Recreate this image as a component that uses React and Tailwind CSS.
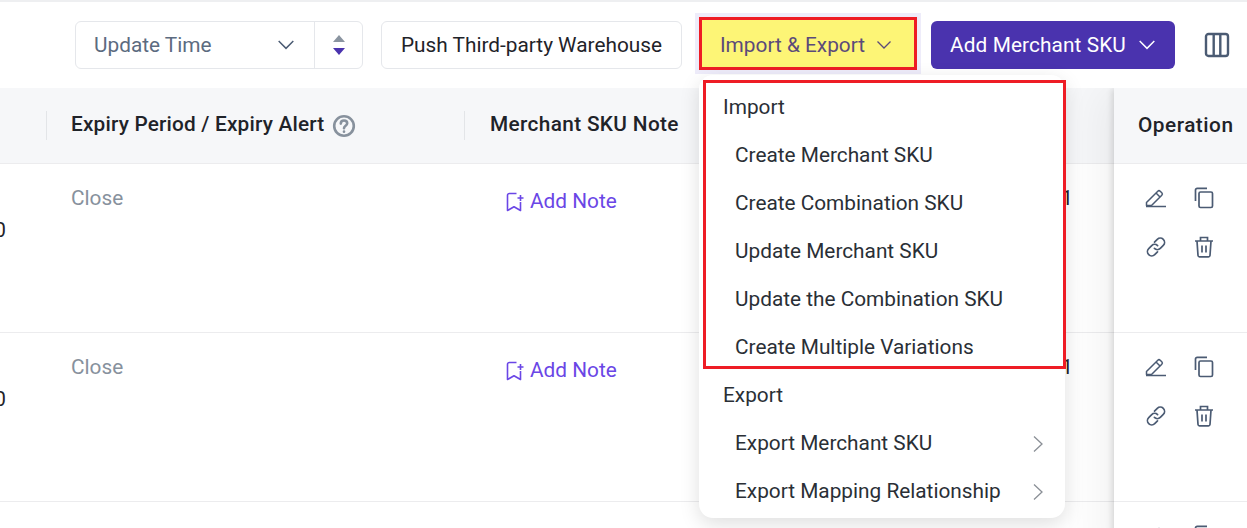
import React from "react";

function Chevron({ className = "" }) {
  return (
    <svg viewBox="0 0 16 16" fill="none" stroke="currentColor" strokeWidth="1.3" className={className}>
      <path d="M1.5 4.5 8 11l6.5-6.5" />
    </svg>
  );
}

function ColumnsIcon() {
  return (
    <svg width="26" height="26" viewBox="0 0 26 26" fill="none" stroke="#4b5b73" strokeWidth="2.4">
      <rect x="2" y="2" width="22" height="22" rx="2.500" />
      <path d="M9.700 2v22M16.300 2v22" />
    </svg>
  );
}

function SortIcon() {
  return (
    <svg width="14" height="20" viewBox="0 0 14 20">
      <path d="M7 0l6 7H1z" fill="#8a94a0" />
      <path d="M7 20l6-7H1z" fill="#4a33ae" />
    </svg>
  );
}

function HelpIcon() {
  return (
    <svg width="24" height="24" viewBox="0 0 24 24" fill="none" stroke="#87919d" strokeWidth="2.600" strokeLinecap="round">
      <circle cx="12" cy="12" r="9.800" />
      <path d="M8.800 9.600c0-2 1.500-3.100 3.200-3.100s3.200 1.100 3.200 2.800c0 2.500-3.200 2.500-3.200 5" />
      <path d="M12 17.600v.2" />
    </svg>
  );
}

function NoteIcon() {
  return (
    <svg width="18" height="20" viewBox="0 0 18 20" fill="none" stroke="#6a46e6" strokeWidth="1.600" strokeLinejoin="round">
      <path d="M10.500 1.500H3.400A1.900 1.900 0 0 0 1.500 3.400V18.500L8 14.800l6.500 3.700V10" />
      <path d="M14.500 3v6M11.500 6h6" />
    </svg>
  );
}

function EditIcon() {
  return (
    <svg width="22" height="22" viewBox="0 0 22 22" fill="none" stroke="#4b5b73" strokeWidth="1.500" strokeLinejoin="round">
      <path d="M1.500 15.500 12.800 4.200a1.700 1.700 0 0 1 2.400 0l1.600 1.600a1.700 1.700 0 0 1 0 2.400L6.500 18.500h-5z" />
      <path d="M1 19.500h20M11 6l4 4" />
    </svg>
  );
}

function CopyIcon() {
  return (
    <svg width="20" height="22" viewBox="0 0 20 22" fill="none" stroke="#4b5b73" strokeWidth="1.700">
      <path d="M1.500 14V3A1.700 1.700 0 0 1 3.200 1.300H13" />
      <rect x="5" y="5" width="13.500" height="15.500" rx="1.500" />
    </svg>
  );
}

function LinkIcon() {
  return (
    <svg width="22" height="22" viewBox="0 0 22 22" fill="none" stroke="#4b5b73" strokeWidth="1.700" strokeLinecap="round">
      <path d="M9.500 6.200 12.300 3.400a4.200 4.200 0 0 1 6 6l-3 3a4.200 4.200 0 0 1-5.900 0" />
      <path d="M12.500 15.800 9.700 18.600a4.200 4.200 0 0 1-6-6l3-3a4.200 4.200 0 0 1 5.900 0" />
    </svg>
  );
}

function TrashIcon() {
  return (
    <svg width="20" height="22" viewBox="0 0 20 22" fill="none" stroke="#4b5b73" strokeWidth="1.700">
      <path d="M1 5h18M6.500 5V1.500h7V5" />
      <path d="M3 5l1 14.500a1.500 1.500 0 0 0 1.500 1.300h9a1.500 1.500 0 0 0 1.500-1.300L17 5" />
      <path d="M8 9.500v7M12 9.500v7" />
    </svg>
  );
}

function Row({ value, last }) {
  return (
    <div className={`flex ${last ? "h-[60px]" : "h-[169px] border-b border-[#ececee]"}`}>
      <div className="w-[47px] shrink-0 relative overflow-hidden">
        {value && <span className="absolute right-[41px] top-[52px] text-[20.8px] leading-[28px] text-[#1f2329]">{value}</span>}
      </div>
      <div className="w-[418px] shrink-0 pl-[24px] pt-[20px] text-[20.8px] leading-[28px] text-[#87919d]">Close</div>
      <div className="w-[232px] shrink-0 pl-[41px] pt-[23px] flex items-start gap-[6px]">
        {!last && (
          <>
            <span className="mt-[5px]"><NoteIcon /></span>
            <span className="text-[20.8px] leading-[28px] text-[#6a46e6]">Add Note</span>
          </>
        )}
      </div>
      <div className="flex-1 overflow-hidden text-right whitespace-nowrap pr-[41px] pt-[20px] text-[20.8px] leading-[28px] text-[#1f2329]">2024-03-25 10:30:21</div>
    </div>
  );
}

function OpRow({ last }) {
  return (
    <div className={`${last ? "h-[60px]" : "h-[169px] border-b border-[#ececee]"} pl-[30px] pt-[23px]`}>
      <div className="grid grid-cols-[48px_48px] gap-y-[27px]">
        <span className="flex w-[24px] justify-center"><EditIcon /></span>
        <span className="flex w-[24px] justify-center"><CopyIcon /></span>
        <span className="flex w-[24px] justify-center"><LinkIcon /></span>
        <span className="flex w-[24px] justify-center"><TrashIcon /></span>
      </div>
    </div>
  );
}

function Item({ children, arrow }) {
  return (
    <div className="h-[48px] flex items-center justify-between pl-[36px] pr-[21px] text-[#2a2f36]">
      <span>{children}</span>
      {arrow && (
        <svg width="12" height="18" viewBox="0 0 12 18" fill="none" stroke="#8a8f96" strokeWidth="1.300">
          <path d="M2 1.500 10 9l-8 7.500" />
        </svg>
      )}
    </div>
  );
}

function Group({ children }) {
  return <div className="h-[48px] flex items-center pl-[24px] text-[#2a2f36]">{children}</div>;
}

export default function App() {
  return (
    <div className="relative h-[528px] w-[1247px] overflow-hidden bg-white font-['Roboto',sans-serif]">
      <div className="h-[2px] border-t-2 border-[#eeeff1]" />

      {/* toolbar */}
      <div className="h-[86px] flex items-center pl-[75px] pr-[14px] text-[20.8px]">
        <div className="h-[48px] w-[288px] flex rounded-[6px] border border-[#e5e7eb] text-[#5c6b80]">
          <div className="flex-1 flex items-center justify-between pl-[18px] pr-[19px] border-r border-[#e5e7eb]">
            <span className="pt-[2px]">Update Time</span>
            <Chevron className="w-[18px] h-[18px] text-[#4b5b73]" />
          </div>
          <div className="w-[47px] flex items-center justify-center"><SortIcon /></div>
        </div>
        <div className="ml-[18px] h-[48px] w-[301px] flex items-center justify-center rounded-[6px] border border-[#e5e7eb] text-[#1f2329]">
          <span className="pt-[2px]">Push Third-party Warehouse</span>
        </div>
        <div className="ml-[17px] mb-[3px] h-[53px] w-[218px] flex items-center justify-center gap-[11px] pr-[4px] bg-[#fdf576] border-[3px] border-[#ee1c25] ring-[4px] ring-[#eeecfa] text-[#5b4a7a]">
          <span className="pt-[5px]">Import &amp; Export</span>
          <Chevron className="w-[16px] h-[16px] mt-[3px]" />
        </div>
        <div className="ml-[14px] h-[48px] w-[244px] flex items-center justify-center gap-[12px] rounded-[6px] bg-[#4a33ae] text-white">
          <span className="pt-[2px] tracking-[0.1px]">Add Merchant SKU</span>
          <Chevron className="w-[18px] h-[18px]" />
        </div>
        <div className="ml-[29px]"><ColumnsIcon /></div>
      </div>

      {/* table */}
      <div className="flex overflow-hidden">
        <div className="w-[1114px] shrink-0">
          <div className="h-[76px] flex items-center bg-[#f6f7f9] border-b border-[#ececee] text-[20.8px] font-medium text-[#1f2329]">
            <div className="w-[47px] shrink-0 h-[29px] border-r border-[#e3e5e8]" />
            <div className="w-[417px] shrink-0 pl-[24px] flex items-center gap-[8px] tracking-[0.19px]">
              <span className="-mt-[1px]">Expiry Period / Expiry Alert</span>
              <HelpIcon />
            </div>
            <div className="h-[29px] border-l border-[#e3e5e8] pl-[25px] leading-[26px] tracking-[0.35px]">Merchant SKU Note</div>
          </div>
          <Row value="0" />
          <Row value="0" />
          <Row last />
        </div>
        <div className="flex-1 shadow-[-3px_0_6px_-1px_rgba(0,0,0,0.13),-16px_0_40px_rgba(0,0,0,0.05)] z-10 bg-white">
          <div className="h-[76px] flex items-center pl-[24px] bg-[#f6f7f9] border-b border-[#ececee] text-[20.8px] font-medium tracking-[0.5px] text-[#1f2329]">
            Operation
          </div>
          <OpRow />
          <OpRow />
          <OpRow last />
        </div>
      </div>

      {/* dropdown */}
      <div className="absolute left-[699px] top-[75px] z-20 w-[366px] h-[443px] rounded-[14px] bg-white pt-[9px] text-[20.8px] shadow-[0_6px_20px_rgba(0,0,0,0.13)]">
        <Group>Import</Group>
        <Item>Create Merchant SKU</Item>
        <Item>Create Combination SKU</Item>
        <Item>Update Merchant SKU</Item>
        <Item>Update the Combination SKU</Item>
        <Item>Create Multiple Variations</Item>
        <Group>Export</Group>
        <Item arrow>Export Merchant SKU</Item>
        <Item arrow>Export Mapping Relationship</Item>
        <div className="absolute left-[4px] top-[5px] w-[363px] h-[289px] border-[3px] border-[#ee1c25] pointer-events-none" />
      </div>
    </div>
  );
}
